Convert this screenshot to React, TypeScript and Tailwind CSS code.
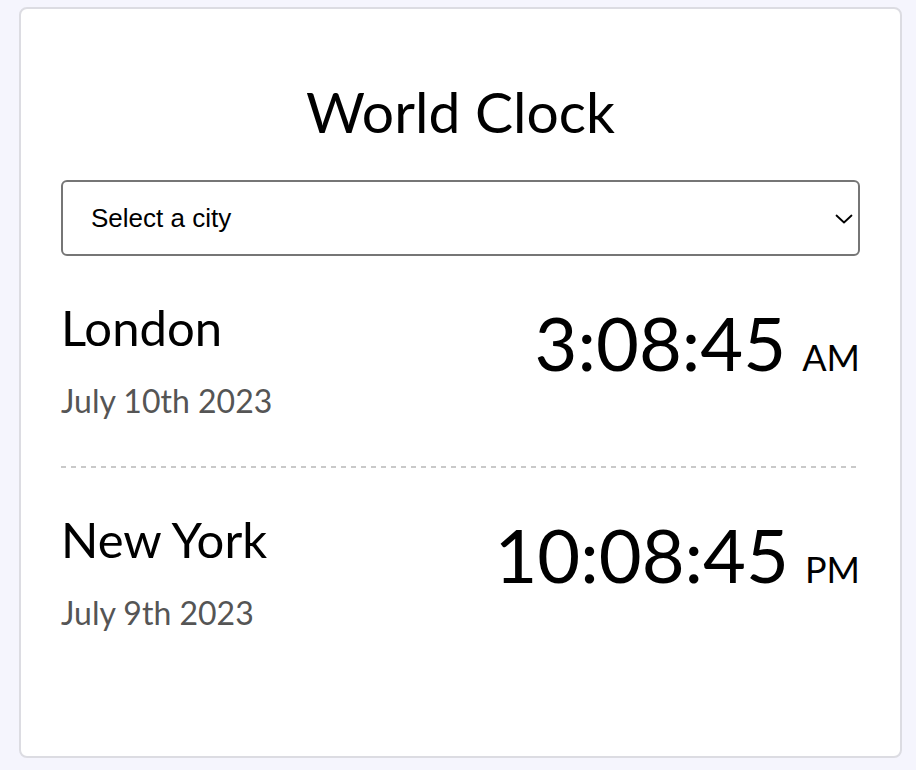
interface CityClock {
  city: string
  date: string
  time: string
  period: string
}

const clocks: CityClock[] = [
  { city: 'London', date: 'July 10th 2023', time: '3:08:45', period: 'AM' },
  { city: 'New York', date: 'July 9th 2023', time: '10:08:45', period: 'PM' },
]

function ClockRow({ city, date, time, period }: CityClock) {
  return (
    <div className="flex items-start justify-between">
      <div className="flex flex-col">
        <span className="text-[49px] leading-[64px] text-black">{city}</span>
        <span className="mt-[24px] text-[32px] leading-[36px] text-[#555]">
          {date}
        </span>
      </div>
      <div className="mt-[2px] flex items-baseline text-black">
        <span className="text-[74px] leading-[92px]">{time}</span>
        <span className="ml-[16px] text-[36px] uppercase">{period}</span>
      </div>
    </div>
  )
}

export default function App() {
  return (
    <div className="min-h-screen bg-[#f5f5fd] px-[19px] pt-[7px] font-['Lato',sans-serif]">
      <div className="h-[751px] w-[883px] rounded-lg border-2 border-[#dcdce2] bg-white px-[40px]">
        <h1 className="mt-[68px] text-center text-[57px] leading-[68px] text-black">
          World Clock
        </h1>
        <div className="relative mt-[35px]">
          <select
            defaultValue=""
            className="h-[76px] w-full appearance-none rounded-md border-2 border-[#767676] bg-white px-[28px] font-['Liberation_Sans',sans-serif] text-[26px] text-black"
          >
            <option value="">Select a city</option>
            <option value="london">London</option>
            <option value="new-york">New York</option>
          </select>
          <svg
            viewBox="0 0 18 10"
            className="pointer-events-none absolute top-[34px] right-[7px] h-[10px] w-[18px]"
            fill="none"
            stroke="black"
            strokeWidth={1.8}
            strokeLinecap="round"
            strokeLinejoin="round"
          >
            <polyline points="1.5,1.5 9,8.5 16.5,1.5" />
          </svg>
        </div>
        <div className="mt-[39px]">
          {clocks.map((clock, i) => (
            <div key={clock.city}>
              {i > 0 && (
                <div className="mb-[39px] h-[2px] bg-[repeating-linear-gradient(to_right,#c9c9c9_0_5px,transparent_5px_10px)]" />
              )}
              <div className={i === 0 ? 'pb-[47px]' : ''}>
                <ClockRow {...clock} />
              </div>
            </div>
          ))}
        </div>
      </div>
    </div>
  )
}
